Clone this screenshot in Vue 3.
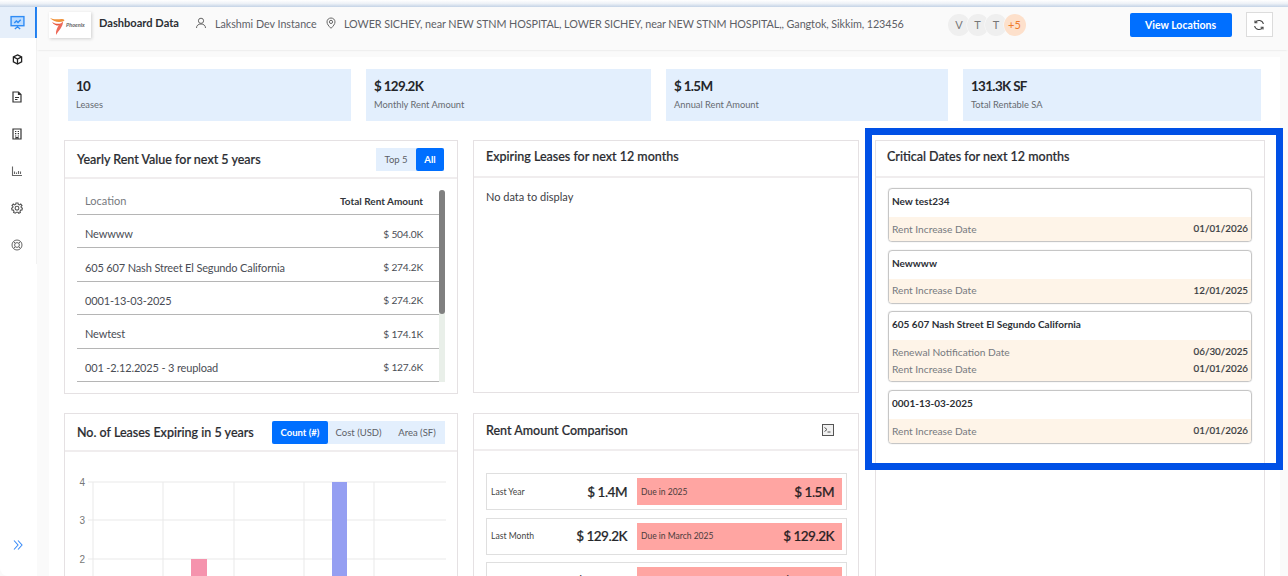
<script setup>
const navIcons = ['cube', 'doc', 'building', 'chart', 'gear', 'ring']
const kpis = [
  { v: '10', l: 'Leases' },
  { v: '$ 129.2K', l: 'Monthly Rent Amount' },
  { v: '$ 1.5M', l: 'Annual Rent Amount' },
  { v: '131.3K SF', l: 'Total Rentable SA' }
]
const rents = [
  ['Newwww', '$ 504.0K'],
  ['605 607 Nash Street El Segundo California', '$ 274.2K'],
  ['0001-13-03-2025', '$ 274.2K'],
  ['Newtest', '$ 174.1K'],
  ['001 -2.12.2025 - 3 reupload', '$ 127.6K']
]
const compare = [
  { l: 'Last Year', a: '$ 1.4M', d: 'Due in 2025', b: '$ 1.5M' },
  { l: 'Last Month', a: '$ 129.2K', d: 'Due in March 2025', b: '$ 129.2K' },
  { l: 'Next Month', a: '$ 323.4K', d: 'Due in April 2025', b: '$ 323.4K' }
]
const critical = [
  { t: 'New test234', r: [['Rent Increase Date', '01/01/2026']] },
  { t: 'Newwww', r: [['Rent Increase Date', '12/01/2025']] },
  { t: '605 607 Nash Street El Segundo California', r: [['Renewal Notification Date', '06/30/2025'], ['Rent Increase Date', '01/01/2026']] },
  { t: '0001-13-03-2025', r: [['Rent Increase Date', '01/01/2026']] }
]
const gridX = [93, 163, 234, 304, 374]
const gridY = [{ y: 30, t: '4' }, { y: 68, t: '3' }, { y: 107, t: '2' }]
</script>

<template>
  <div class="page">
    <div class="strip"></div>
    <div class="shell">
      <aside class="side">
        <nav class="nav">
          <div class="nav-item active">
            <svg width="15" height="15" viewBox="0 0 14 14" fill="none" stroke="#2f8cf5" stroke-width="1.3">
              <rect x="1" y="1.5" width="12" height="8.5" fill="#bcdcff" />
              <path d="M4 7.5 6 5.5 7.5 7 10 4.5M7 10v1.5M4.5 13 7 11l2.5 2" />
            </svg>
          </div>
          <div v-for="n in navIcons" :key="n" class="nav-item">
            <svg v-if="n === 'cube'" width="11" height="11" viewBox="0 0 12 12" fill="none" stroke="#222" stroke-width="1.4">
              <path d="M6 1 10.5 3.2V8.6L6 11 1.5 8.6V3.2ZM1.5 3.2 6 5.6 10.5 3.2M6 5.6V11" />
            </svg>
            <svg v-else-if="n === 'doc'" width="12" height="12" viewBox="0 0 12 12" fill="none" stroke="#333" stroke-width="1.2">
              <path d="M2 1H7.5L10 3.5V11H2ZM7.5 1V3.5H10M4 6.5H8M4 8.5H6.5" />
            </svg>
            <svg v-else-if="n === 'building'" width="12" height="12" viewBox="0 0 12 12" fill="none" stroke="#333" stroke-width="1.2">
              <path d="M2 1H10V11H2ZM4 3.5H5.3M6.7 3.5H8M4 5.7H5.3M6.7 5.7H8M4 8H5.3M6.7 8H8M5 11V9.5H7V11" />
            </svg>
            <svg v-else-if="n === 'chart'" width="12" height="12" viewBox="0 0 12 12" fill="none" stroke="#666" stroke-width="1.1">
              <path d="M1.5 1.5V10.5H11M3.5 9V6.5M5.5 9V7.5M7.5 9V6M9.5 9V6.5" />
            </svg>
            <svg v-else-if="n === 'gear'" width="12" height="12" viewBox="0 0 12 12" fill="none" stroke="#555" stroke-width="1.1">
              <path d="M5 1H7L7.3 2.4 8.5 2.9 9.7 2.1 11 3.6 10 4.7 10.3 5.6 11.4 6.2 11 8 9.7 8.1 9 9.2 9.4 10.4 7.7 11.2 6.9 10.2H5.5L4.3 11.2 2.6 10.4 3 9.2 2.3 8.1 1 8 .6 6.2 1.7 5.6 2 4.7 1 3.6 2.3 2.1 3.5 2.9 4.7 2.4Z" />
              <circle cx="6" cy="6.2" r="1.9" />
            </svg>
            <svg v-else width="12" height="12" viewBox="0 0 12 12" fill="none" stroke="#666" stroke-width="1">
              <circle cx="6" cy="6" r="5" />
              <circle cx="6" cy="6" r="2.4" />
              <path d="M2.6 2.6 4.3 4.3M9.4 2.6 7.7 4.3M2.6 9.4 4.3 7.7M9.4 9.4 7.7 7.7" />
            </svg>
          </div>
        </nav>
        <svg class="expand" width="12" height="12" viewBox="0 0 12 12" fill="none" stroke="#3a8cf7" stroke-width="1.1">
          <path d="M2 1.5 6 6 2 10.5M6 1.5 10 6 6 10.5" />
        </svg>
      </aside>

      <div class="content">
        <header class="topbar">
          <div class="logo">
            <svg width="20" height="24" viewBox="0 0 20 24">
              <path d="M1 5 C5 7 9 6 13 6 C15 6 16 7 15 8 C11 9.5 5 9.5 1 5Z" fill="#f0923a" />
              <path d="M3 9 C6 11 9 11 12 10.5 L11 12.5 C8 13 5 12 3 9Z" fill="#e9583f" />
              <path d="M14 8.5 C14 14 10 17 7 22 C6.5 18 8 14.5 10.5 11.5Z" fill="#ee6a5a" />
            </svg>
            <span class="logo-name">Phoenix</span>
          </div>
          <span class="page-title">Dashboard Data</span>
          <svg class="ti-user" width="12" height="12" viewBox="0 0 12 12" fill="none" stroke="#666" stroke-width="1">
            <circle cx="6" cy="3.8" r="2.6" />
            <path d="M1.5 11C1.5 8.5 3.3 7 6 7S10.5 8.5 10.5 11" />
          </svg>
          <span class="instance">Lakshmi Dev Instance</span>
          <svg class="ti-pin" width="12" height="12" viewBox="0 0 12 12" fill="none" stroke="#666" stroke-width="1">
            <path d="M6 11.3C3.6 9 2 7 2 4.9 2 2.6 3.8 1 6 1S10 2.6 10 4.9C10 7 8.4 9 6 11.3Z" />
            <circle cx="6" cy="4.9" r="1.6" />
          </svg>
          <span class="address">LOWER SICHEY, near NEW STNM HOSPITAL, LOWER SICHEY, near NEW STNM HOSPITAL,, Gangtok, Sikkim, 123456</span>
          <div class="avatars">
            <span class="av">V</span>
            <span class="av">T</span>
            <span class="av">T</span>
            <span class="av more">+5</span>
          </div>
          <button class="view-btn">View Locations</button>
          <button class="refresh">
            <svg width="12" height="12" viewBox="0 0 12 12" fill="none" stroke="#444" stroke-width="1.1">
              <path d="M10.4 5A4.5 4.5 0 0 0 2.2 3.6M1.6 7A4.5 4.5 0 0 0 9.8 8.4" />
              <path d="M2 1.4V3.8H4.4M10 10.6V8.2H7.6" />
            </svg>
          </button>
        </header>

        <main class="main">
          <section class="kpis">
            <div v-for="k in kpis" :key="k.l" class="kpi">
              <div class="kpi-v">{{ k.v }}</div>
              <div class="kpi-l">{{ k.l }}</div>
            </div>
          </section>

          <section class="grid">
            <article class="panel p-rent">
              <div class="head">
                <h3>Yearly Rent Value for next 5 years</h3>
                <div class="toggle">
                  <span class="opt o-top">Top 5</span>
                  <span class="opt on o-all">All</span>
                </div>
              </div>
              <div class="rent-body">
                <div class="rent-table">
                  <div class="rent-row rent-head">
                    <span>Location</span>
                    <b>Total Rent Amount</b>
                  </div>
                  <div v-for="r in rents" :key="r[0]" class="rent-row">
                    <span>{{ r[0] }}</span>
                    <span class="amt">{{ r[1] }}</span>
                  </div>
                </div>
                <div class="scroll"><div class="thumb"></div></div>
              </div>
            </article>

            <article class="panel p-exp">
              <div class="head short"><h3>Expiring Leases for next 12 months</h3></div>
              <div class="none">No data to display</div>
            </article>

            <article class="panel p-crit">
              <div class="head short"><h3>Critical Dates for next 12 months</h3></div>
              <div class="crit-body">
                <div v-for="c in critical" :key="c.t" class="crit">
                  <div class="crit-t">{{ c.t }}</div>
                  <div class="crit-band">
                    <div v-for="r in c.r" :key="r[0]" class="crit-row">
                      <span>{{ r[0] }}</span>
                      <b>{{ r[1] }}</b>
                    </div>
                  </div>
                </div>
              </div>
            </article>

            <article class="panel p-count">
              <div class="head">
                <h3>No. of Leases Expiring in 5 years</h3>
                <div class="toggle">
                  <span class="opt on o-count">Count (#)</span>
                  <span class="opt o-cost">Cost (USD)</span>
                  <span class="opt o-area">Area (SF)</span>
                </div>
              </div>
              <svg class="chart" width="392" height="125" viewBox="65 0 392 125">
                <line v-for="x in gridX" :key="x" :x1="x" :x2="x" y1="30" y2="125" stroke="#e9e9e9" />
                <g v-for="g in gridY" :key="g.t">
                  <line x1="88" x2="446" :y1="g.y" :y2="g.y" stroke="#e9e9e9" />
                  <text x="85" :y="g.y + 4" text-anchor="end" class="tick">{{ g.t }}</text>
                </g>
                <rect x="191" y="107" width="16" height="18" fill="#f593ad" />
                <rect x="332" y="30" width="15" height="95" fill="#959ff2" />
              </svg>
            </article>

            <article class="panel p-comp">
              <div class="head short comp-head">
                <h3>Rent Amount Comparison</h3>
                <svg class="term" width="12" height="12" viewBox="0 0 12 12" fill="none" stroke="#555" stroke-width="1">
                  <rect x=".5" y=".5" width="11" height="11" fill="#f1f1f1" />
                  <path d="M2.5 3.5 5 5.5 2.5 7.5M5.5 8H8.5" />
                </svg>
              </div>
              <div class="comp-body">
                <div v-for="c in compare" :key="c.l" class="comp">
                  <span class="comp-l">{{ c.l }}</span>
                  <span class="comp-a">{{ c.a }}</span>
                  <div class="comp-due">
                    <span class="comp-d">{{ c.d }}</span>
                    <span class="comp-b">{{ c.b }}</span>
                  </div>
                </div>
              </div>
            </article>
          </section>
        </main>
      </div>
    </div>
    <div class="highlight"></div>
  </div>
</template>

<style>
html, body { margin: 0; background: #fff; }
</style>

<style scoped>
.page {
  position: relative;
  width: 1288px;
  height: 576px;
  overflow: hidden;
  background: #fafafa;
  font-family: Lato, "Liberation Sans", sans-serif;
  color: #26282c;
}
.strip {
  height: 7px;
  background: linear-gradient(#ffffff 0, #eef2f7 50%, #c4d3e6 100%);
}
.shell { display: flex; height: 569px; }
.side {
  width: 37px;
  flex: none;
  background: #fff;
  border-bottom-left-radius: 8px;
  display: flex;
  flex-direction: column;
  justify-content: space-between;
}
.nav {
  display: flex;
  flex-direction: column;
  gap: 6px;
  height: 257px;
  border-right: 1px solid #f2f2f2;
  box-sizing: border-box;
}
.nav-item {
  height: 31px;
  display: flex;
  align-items: center;
  justify-content: center;
  padding-right: 3px;
  box-sizing: border-box;
  flex: none;
  margin-right: -1px;
}
.nav-item.active {
  background: #e6effa;
  border-right: 2px solid #1e7ef0;
  padding-right: 0;
}
.expand { margin: 0 0 25px 12px; }
.content { flex: 1; min-width: 0; }
.topbar {
  height: 43px;
  box-sizing: border-box;
  display: flex;
  align-items: center;
  padding: 0 15px 8px 12px;
  box-shadow: 0 1px 2px -1px #d8d8d8;
  font-size: 11px;
  color: #5d6066;
  white-space: nowrap;
}
.logo {
  width: 42px;
  height: 26px;
  flex: none;
  background: #fff;
  box-shadow: 1px 1px 3px #cfcfcf;
  display: flex;
  align-items: center;
}
.logo-name { font-size: 5.5px; color: #666; font-weight: 700; font-style: italic; margin-left: -3px; }
.page-title { margin: -4px 0 0 8px; font-size: 11.1px; font-weight: 700; color: #2c2f34; width: 78px; flex: none; }
.ti-user { margin: -3px 0 0 18px; flex: none; }
.instance { margin: -3px 0 0 8px; width: 102px; flex: none; font-size: 10.7px; }
.ti-pin { margin: -3px 0 0 8px; flex: none; }
.address { margin: -3px 0 0 7px; width: 560px; flex: none; font-size: 10.8px; letter-spacing: -.085px; }
.avatars { margin-left: 44px; display: flex; flex: none; }
.av {
  width: 22px;
  height: 22px;
  border-radius: 50%;
  background: #efefef;
  color: #777;
  font-size: 11px;
  display: flex;
  align-items: center;
  justify-content: center;
  margin-right: -3.5px;
  box-shadow: 0 0 0 .5px #fafafa;
}
.av.more { background: #fde0cb; color: #ef7a2a; margin-right: 0; }
.view-btn {
  margin-left: 104px;
  width: 102px;
  height: 24px;
  flex: none;
  border: 0;
  border-radius: 2px;
  background: #006fff;
  color: #fff;
  font: 700 10.5px Lato, sans-serif;
}
.refresh {
  margin-left: 14px;
  width: 27px;
  height: 25px;
  flex: none;
  padding: 0;
  background: #fff;
  border: 1px solid #dcdcdc;
  display: flex;
  align-items: center;
  justify-content: center;
}
.main {
  margin: 7px 8px 0 12px;
  background: #fff;
  height: 600px;
  padding: 12px 15px 0;
  box-sizing: border-box;
}
.kpis {
  display: grid;
  grid-template-columns: 283px 285px 282px 298px;
  column-gap: 15px;
  margin-left: 4px;
}
.kpi {
  height: 52px;
  box-sizing: border-box;
  background: #e3effd;
  padding: 9px 8px;
}
.kpi-v { font-size: 13.4px; font-weight: 700; line-height: 17px; color: #24262a; letter-spacing: -.65px; }
.kpi-l { font-size: 9.3px; line-height: 12px; margin-top: 4px; color: #666a70; }
.grid {
  margin-top: 19px;
  display: grid;
  grid-template-columns: 394px 386px 390px;
  grid-template-rows: 254px 300px;
  column-gap: 15px;
  row-gap: 19px;
}
.panel {
  border: 1px solid #e5e1e3;
  box-sizing: border-box;
  background: #fff;
  min-width: 0;
}
.p-crit { grid-column: 3; grid-row: 1 / span 2; margin-left: 1px; margin-right: -1px; }
.p-rent { grid-column: 1; grid-row: 1; }
.p-exp { grid-column: 2; grid-row: 1; height: 253px; }
.p-count { grid-column: 1; grid-row: 2; }
.p-comp { grid-column: 2; grid-row: 2; }
.head {
  height: 38px;
  box-sizing: border-box;
  border-bottom: 2px solid #f0edee;
  padding: 0 13px 0 12px;
  display: flex;
  align-items: center;
  justify-content: space-between;
}
.head.short { height: 37px; padding-bottom: 5px; }
.head.comp-head { padding-bottom: 3px; }
.p-crit .head { padding-left: 11px; }
h3 { margin: 0; font-size: 12.5px; font-weight: 500; color: #2a2c31; white-space: nowrap; -webkit-text-stroke: .2px #2a2c31; }
.toggle { display: flex; background: #e3effd; height: 23px; font-size: 9.5px; color: #5c6067; }
.opt { display: flex; align-items: center; justify-content: center; }
.opt.on { background: #006fff; color: #fff; font-weight: 700; border-radius: 2px; }
.o-top { width: 40px; }
.o-all { width: 28px; }
.o-count { width: 56px; }
.o-cost { width: 61px; }
.o-area { width: 56px; }
.p-count .head { padding-right: 12px; }
.rent-body { display: flex; padding: 11px 12px 0; }
.rent-table { width: 363px; }
.rent-row {
  height: 33.4px;
  box-sizing: border-box;
  border-bottom: 1px solid #b5b5b5;
  display: flex;
  align-items: center;
  justify-content: space-between;
  padding: 5px 16px 0 8px;
  font-size: 11px;
  letter-spacing: -.15px;
  color: #4a4d55;
}
.rent-head { height: 25px; padding: 0 16px 3px 8px; color: #777a80; letter-spacing: 0; }
.rent-head b { font-size: 10px; color: #33363b; font-weight: 700; }
.amt { font-size: 10.2px; letter-spacing: -.2px; }
.scroll { width: 6px; height: 192px; background: #e9efe9; border-radius: 3px 3px 0 0; }
.thumb { height: 124px; background: #808080; border-radius: 3px; }
.none { padding: 12px; font-size: 11px; color: #3d4046; }
.crit-body { padding: 10px 12px; display: flex; flex-direction: column; gap: 7.7px; }
.crit {
  border: 1px solid #c6c6c6;
  border-radius: 4px;
  overflow: hidden;
  box-shadow: 0 0 1px #bbb;
}
.crit-t { height: 28px; padding: 6px 3px 0; box-sizing: border-box; font-size: 10px; font-weight: 700; color: #2c2f35; line-height: 12px; }
.crit-band { background: #fef4e8; padding: 3px 3px 4px; }
.crit-row {
  height: 17px;
  display: flex;
  justify-content: space-between;
  align-items: center;
  font-size: 10.2px;
  color: #777a7f;
}
.crit-row b { font-size: 9.8px; font-weight: 500; color: #3a3d42; margin-top: -1px; -webkit-text-stroke: .15px #3a3d42; }
.chart { display: block; }
.tick { font: 10px "Liberation Sans", sans-serif; fill: #777; }
.term { margin-right: 11px; }
.comp-body { padding: 22px 11px 0 12px; display: flex; flex-direction: column; gap: 7.5px; }
.comp {
  height: 37px;
  box-sizing: border-box;
  border: 1px solid #dfdfdf;
  display: flex;
  align-items: center;
  padding: 4px;
  flex: none;
}
.comp-l { width: 50px; font-size: 8.6px; color: #444; flex: none; }
.comp-a { width: 86px; text-align: right; font-size: 13.5px; font-weight: 500; color: #25272b; letter-spacing: -.5px; -webkit-text-stroke: .2px #25272b; flex: none; }
.comp-due {
  margin-left: 10px;
  width: 205px;
  height: 27px;
  flex: none;
  background: #ffa5a2;
  display: flex;
  align-items: center;
  justify-content: space-between;
  padding: 0 8px 0 4px;
  box-sizing: border-box;
}
.comp-d { font-size: 8.5px; color: #4a3c3c; }
.comp-b { font-size: 13.5px; font-weight: 500; color: #2a2225; letter-spacing: -.5px; -webkit-text-stroke: .2px #2a2225; }
.highlight {
  position: absolute;
  left: 865px;
  top: 128px;
  width: 418px;
  height: 342px;
  box-sizing: border-box;
  border: 7px solid #0050e6;
  pointer-events: none;
}
</style>
